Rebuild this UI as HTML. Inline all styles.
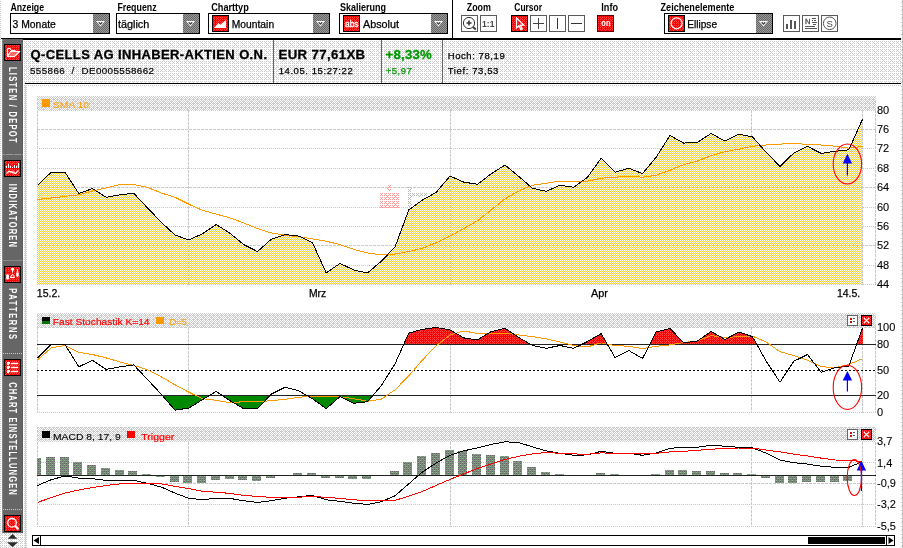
<!DOCTYPE html>
<html><head><meta charset="utf-8"><title>Q-CELLS AG Chart</title>
<style>
html,body{margin:0;padding:0;background:#fff;}
svg{display:block;will-change:transform;}
text{font-family:"Liberation Sans",sans-serif;}
.b{font-weight:bold;}
.t{stroke:#000;stroke-width:0.250px;}
.ln{fill:none;stroke-width:1;stroke-linejoin:round;shape-rendering:crispEdges;}
</style></head><body>
<svg width="903" height="548" viewBox="0 0 903 548" shape-rendering="crispEdges">
<defs>
<pattern id="dl" width="8" height="8" patternUnits="userSpaceOnUse"><rect width="8" height="8" fill="#fff"/><path d="M0 1h1v1h-1zM2 1h1v1h-1zM4 1h1v1h-1zM6 1h1v1h-1zM0 3h1v1h-1zM2 3h1v1h-1zM4 3h1v1h-1zM6 3h1v1h-1zM0 5h1v1h-1zM2 5h1v1h-1zM4 5h1v1h-1zM6 5h1v1h-1zM0 7h1v1h-1zM2 7h1v1h-1zM4 7h1v1h-1zM6 7h1v1h-1zM1 2h1v1h-1zM5 2h1v1h-1zM3 4h1v1h-1zM1 6h1v1h-1zM5 6h1v1h-1z" fill="#ccc"/></pattern>
<pattern id="dm" width="8" height="8" patternUnits="userSpaceOnUse"><rect width="8" height="8" fill="#fff"/><path d="M1 0h1v1h-1zM3 0h1v1h-1zM5 0h1v1h-1zM7 0h1v1h-1zM0 1h1v1h-1zM2 1h1v1h-1zM4 1h1v1h-1zM6 1h1v1h-1zM1 2h1v1h-1zM3 2h1v1h-1zM5 2h1v1h-1zM7 2h1v1h-1zM0 3h1v1h-1zM2 3h1v1h-1zM4 3h1v1h-1zM6 3h1v1h-1zM1 4h1v1h-1zM3 4h1v1h-1zM5 4h1v1h-1zM7 4h1v1h-1zM0 5h1v1h-1zM2 5h1v1h-1zM4 5h1v1h-1zM6 5h1v1h-1zM1 6h1v1h-1zM3 6h1v1h-1zM5 6h1v1h-1zM7 6h1v1h-1zM0 7h1v1h-1zM2 7h1v1h-1zM4 7h1v1h-1zM6 7h1v1h-1zM1 3h1v1h-1zM5 3h1v1h-1zM3 5h1v1h-1zM1 7h1v1h-1zM5 7h1v1h-1z" fill="#ccc"/></pattern>
<pattern id="dp" width="8" height="8" patternUnits="userSpaceOnUse"><path d="M0 1h1v1h-1zM2 1h1v1h-1zM4 1h1v1h-1zM6 1h1v1h-1zM0 3h1v1h-1zM2 3h1v1h-1zM4 3h1v1h-1zM6 3h1v1h-1zM0 5h1v1h-1zM2 5h1v1h-1zM4 5h1v1h-1zM6 5h1v1h-1zM0 7h1v1h-1zM2 7h1v1h-1zM4 7h1v1h-1zM6 7h1v1h-1zM1 2h1v1h-1zM5 2h1v1h-1zM3 4h1v1h-1zM1 6h1v1h-1zM5 6h1v1h-1z" fill="#f99"/></pattern>
<pattern id="dg" width="8" height="8" patternUnits="userSpaceOnUse"><path d="M0 1h1v1h-1zM2 1h1v1h-1zM4 1h1v1h-1zM6 1h1v1h-1zM0 3h1v1h-1zM2 3h1v1h-1zM4 3h1v1h-1zM6 3h1v1h-1zM0 5h1v1h-1zM2 5h1v1h-1zM4 5h1v1h-1zM6 5h1v1h-1zM0 7h1v1h-1zM2 7h1v1h-1zM4 7h1v1h-1zM6 7h1v1h-1zM1 2h1v1h-1zM5 2h1v1h-1zM3 4h1v1h-1zM1 6h1v1h-1zM5 6h1v1h-1z" fill="#bbb"/></pattern>
<pattern id="po" width="1" height="2" patternUnits="userSpaceOnUse"><rect y="1" width="1" height="1" fill="#ccc"/></pattern>
<pattern id="pe" width="2" height="1" patternUnits="userSpaceOnUse"><rect width="1" height="1" fill="#ccc"/></pattern>
<pattern id="p4" width="1" height="4" patternUnits="userSpaceOnUse"><rect y="2" width="1" height="1" fill="#ccc"/></pattern>
<pattern id="p8" width="1" height="8" patternUnits="userSpaceOnUse"><rect y="1" width="1" height="1" fill="#999"/></pattern>
<pattern id="dr" width="8" height="8" patternUnits="userSpaceOnUse"><rect width="8" height="8" fill="#f00"/><path d="M0 1h1v1h-1zM2 1h1v1h-1zM4 1h1v1h-1zM6 1h1v1h-1zM0 3h1v1h-1zM2 3h1v1h-1zM4 3h1v1h-1zM6 3h1v1h-1zM0 5h1v1h-1zM2 5h1v1h-1zM4 5h1v1h-1zM6 5h1v1h-1zM0 7h1v1h-1zM2 7h1v1h-1zM4 7h1v1h-1zM6 7h1v1h-1zM1 2h1v1h-1zM5 2h1v1h-1zM3 4h1v1h-1zM1 6h1v1h-1zM5 6h1v1h-1z" fill="#f44"/></pattern>
<pattern id="db" width="2" height="2" patternUnits="userSpaceOnUse"><rect width="2" height="2" fill="#999"/><path d="M0 0h1v1h-1zM1 1h1v1h-1z" fill="#666"/></pattern>
<pattern id="mt" width="2" height="2" patternUnits="userSpaceOnUse"><rect width="2" height="2" fill="#fff"/><path d="M1 0h1v1h-1zM0 1h1v1h-1z" fill="#fc3"/></pattern>
<pattern id="gb" width="4" height="4" patternUnits="userSpaceOnUse"><rect width="4" height="4" fill="#66a066"/><path d="M2 1h1v1h-1zM2 3h1v1h-1zM0 3h1v1h-1zM0 1h1v1h-1z" fill="#666"/><path d="M2 2h1v1h-1zM0 0h1v1h-1z" fill="#aaa"/></pattern>
<clipPath id="c80"><rect x="37" y="320" width="826" height="24.5"/></clipPath>
<clipPath id="c20"><rect x="37" y="395.5" width="826" height="30"/></clipPath>
</defs>

<rect x="0" y="0" width="903" height="548" fill="#fff"/>
<rect x="24" y="40" width="877" height="44" fill="url(#dl)"/>
<rect x="24" y="85" width="877" height="1" fill="url(#pe)"/>
<rect x="24" y="85" width="1" height="463" fill="url(#po)"/><rect x="26" y="85" width="1" height="463" fill="url(#po)"/><rect x="25" y="85" width="1" height="463" fill="#d2d2d2"/>
<rect x="0" y="0" width="1" height="533" fill="url(#po)"/>
<rect x="0" y="533" width="24" height="15" fill="url(#dl)"/>
<rect x="901" y="0" width="1" height="548" fill="url(#p4)"/>
<rect x="902" y="0" width="1" height="548" fill="#ccc"/><rect x="902" y="0" width="1" height="548" fill="url(#p8)"/>
<rect x="2" y="38" width="899" height="2" fill="#000"/>
<rect x="25" y="83" width="876" height="1" fill="#000"/>
<rect x="273" y="40" width="1" height="43" fill="#666"/>
<rect x="381" y="40" width="1" height="43" fill="#666"/>
<rect x="442" y="40" width="1" height="43" fill="#666"/>
<text class="b" x="10.4" y="11" font-size="11.300" textLength="33.7" lengthAdjust="spacingAndGlyphs">Anzeige</text>
<rect x="10.5" y="13.5" width="99" height="20" fill="#fff" stroke="#000" stroke-width="1"/>
<rect x="93" y="14" width="16" height="19" fill="url(#db)"/>
<path d="M96 21h9l-4.5 5.5z" fill="#fff" shape-rendering="geometricPrecision"/>
<path d="M98.7 22.200l1.800 1.800l1.800 -1.800" fill="none" stroke="#444" stroke-width="1.300" shape-rendering="geometricPrecision"/>
<text class="t" x="12.6" y="27.700" font-size="10" textLength="43.2" lengthAdjust="spacingAndGlyphs">3 Monate</text>
<text class="b" x="117.4" y="11" font-size="11.300" textLength="39.2" lengthAdjust="spacingAndGlyphs">Frequenz</text>
<rect x="116.5" y="13.5" width="83" height="20" fill="#fff" stroke="#000" stroke-width="1"/>
<rect x="183" y="14" width="16" height="19" fill="url(#db)"/>
<path d="M186 21h9l-4.5 5.5z" fill="#fff" shape-rendering="geometricPrecision"/>
<path d="M188.7 22.200l1.800 1.800l1.800 -1.800" fill="none" stroke="#444" stroke-width="1.300" shape-rendering="geometricPrecision"/>
<text class="t" x="117.9" y="27.700" font-size="10" textLength="31.4" lengthAdjust="spacingAndGlyphs">täglich</text>
<text class="b" x="211.2" y="11" font-size="11.300" textLength="37.6" lengthAdjust="spacingAndGlyphs">Charttyp</text>
<rect x="208.5" y="13.5" width="121" height="20" fill="#fff" stroke="#000" stroke-width="1"/>
<rect x="313" y="14" width="16" height="19" fill="url(#db)"/>
<path d="M316 21h9l-4.5 5.5z" fill="#fff" shape-rendering="geometricPrecision"/>
<path d="M318.7 22.200l1.800 1.800l1.800 -1.800" fill="none" stroke="#444" stroke-width="1.300" shape-rendering="geometricPrecision"/>
<text class="t" x="231.8" y="27.700" font-size="10" textLength="42.3" lengthAdjust="spacingAndGlyphs">Mountain</text>
<text class="b" x="340" y="11" font-size="11.300" textLength="46" lengthAdjust="spacingAndGlyphs">Skalierung</text>
<rect x="339.5" y="13.5" width="108" height="20" fill="#fff" stroke="#000" stroke-width="1"/>
<rect x="431" y="14" width="16" height="19" fill="url(#db)"/>
<path d="M434 21h9l-4.5 5.5z" fill="#fff" shape-rendering="geometricPrecision"/>
<path d="M436.7 22.200l1.800 1.800l1.800 -1.800" fill="none" stroke="#444" stroke-width="1.300" shape-rendering="geometricPrecision"/>
<text class="t" x="363" y="27.700" font-size="10" textLength="36" lengthAdjust="spacingAndGlyphs">Absolut</text>
<text class="b" x="466.7" y="11" font-size="11.300" textLength="24.3" lengthAdjust="spacingAndGlyphs">Zoom</text>
<text class="b" x="514.3" y="11" font-size="11.300" textLength="27.7" lengthAdjust="spacingAndGlyphs">Cursor</text>
<text class="b" x="601.3" y="11" font-size="11.300" textLength="16.7" lengthAdjust="spacingAndGlyphs">Info</text>
<text class="b" x="660.5" y="11" font-size="11.300" textLength="73.9" lengthAdjust="spacingAndGlyphs">Zeichenelemente</text>
<rect x="664.5" y="13.5" width="108" height="20" fill="#fff" stroke="#000" stroke-width="1"/>
<rect x="756" y="14" width="16" height="19" fill="url(#db)"/>
<path d="M759 21h9l-4.5 5.5z" fill="#fff" shape-rendering="geometricPrecision"/>
<path d="M761.7 22.200l1.800 1.800l1.800 -1.800" fill="none" stroke="#444" stroke-width="1.300" shape-rendering="geometricPrecision"/>
<text class="t" x="687.3" y="27.700" font-size="10" textLength="29.7" lengthAdjust="spacingAndGlyphs">Ellipse</text>
<rect x="212.5" y="15.5" width="16" height="16" fill="url(#dr)" stroke="#000" stroke-width="1"/>
<path d="M214 28l4.400 -5l1.900 1.800l5.700 -4.800v8z" fill="#fff" shape-rendering="geometricPrecision"/>
<rect x="343.5" y="15.5" width="16" height="16" fill="url(#dr)" stroke="#000" stroke-width="1"/>
<text x="345" y="26.700" font-size="9" fill="#fff" stroke="#fff" stroke-width="0.300" textLength="13.500" lengthAdjust="spacingAndGlyphs">abs</text>
<rect x="668.5" y="15.5" width="16" height="16" fill="url(#dr)" stroke="#000" stroke-width="1"/>
<circle cx="676.600" cy="23.300" r="5.500" fill="none" stroke="#fff" stroke-width="1.2" shape-rendering="geometricPrecision"/>
<rect x="461.5" y="15.5" width="16" height="16" fill="#fff" stroke="#5a5a5a" stroke-width="1"/>
<rect x="480.5" y="15.5" width="16" height="16" fill="#fff" stroke="#5a5a5a" stroke-width="1"/>
<g shape-rendering="geometricPrecision" fill="none" stroke="#333"><circle cx="469" cy="23" r="5.600" stroke-width="1"/><path d="M466.500 23h5M469 20.500v5" stroke-width="1.500"/><path d="M473 27l2.800 2.500" stroke-width="1.800"/></g>
<text class="b" x="482.100" y="26.900" font-size="9.800" fill="#444" textLength="12.300" lengthAdjust="spacingAndGlyphs">1:1</text>
<rect x="511.5" y="15.5" width="16" height="16" fill="url(#dr)" stroke="#000" stroke-width="1"/>
<path d="M516.500 18v10l2.500 -2.300l1.800 3.900l1.400 -0.600l-1.800 -3.900h3.500z" fill="none" stroke="#fff" stroke-width="1.2" shape-rendering="geometricPrecision"/>
<rect x="530.5" y="15.5" width="16" height="16" fill="#fff" stroke="#5a5a5a" stroke-width="1"/>
<rect x="549.5" y="15.5" width="16" height="16" fill="#fff" stroke="#5a5a5a" stroke-width="1"/>
<rect x="568.5" y="15.5" width="16" height="16" fill="#fff" stroke="#5a5a5a" stroke-width="1"/>
<path d="M533 23.500h11M538.500 18v11" stroke="#444" stroke-width="1" fill="none"/>
<path d="M557.500 18v11" stroke="#333" stroke-width="1" fill="none"/>
<path d="M571 23.500h11" stroke="#333" stroke-width="1" fill="none"/>
<rect x="597.500" y="15.500" width="16" height="16" fill="url(#dr)" stroke="#600" stroke-width="1"/>
<text class="b" x="601.300" y="26" font-size="8.500" fill="#fff" textLength="9.200" lengthAdjust="spacingAndGlyphs">on</text>
<rect x="783.5" y="15.5" width="16" height="16" fill="#fff" stroke="#5a5a5a" stroke-width="1"/>
<rect x="802.5" y="15.5" width="16" height="16" fill="#fff" stroke="#5a5a5a" stroke-width="1"/>
<rect x="821.5" y="15.5" width="16" height="16" fill="#fff" stroke="#5a5a5a" stroke-width="1"/>
<path d="M786 24h2v5h-2zM790 20h2v9h-2zM794 21h2v8h-2z" fill="#555"/>
<text x="805" y="23.500" font-size="7.500" fill="#444" stroke="#444" stroke-width="0.300">N</text>
<path d="M812 18.500h4M812 20.500h1M814 20.500h2M812 22.500h5M813 24.500h3M805 26.500h10M805 28.500h12" stroke="#555" stroke-width="1" fill="none"/>
<circle cx="829.700" cy="23.300" r="6.300" fill="none" stroke="#555" stroke-width="1" shape-rendering="geometricPrecision"/>
<text x="826.500" y="26.700" font-size="9.500" fill="#444">S</text>
<rect x="452" y="0" width="1" height="38" fill="#000"/>
<rect x="2" y="39" width="21" height="494" fill="#666"/><rect x="2" y="39" width="1" height="494" fill="#888"/>
<rect x="22" y="39" width="1" height="494" fill="#5c5c5c"/>
<rect x="1" y="38" width="22" height="1" fill="#000"/>
<text class="b" transform="translate(8.700 66.9) rotate(90) scale(0.670 1)" font-size="11.300" fill="#fff" textLength="113.0" lengthAdjust="spacing">LISTEN / DEPOT</text>
<text class="b" transform="translate(8.700 183.8) rotate(90) scale(0.670 1)" font-size="11.300" fill="#fff" textLength="94.2" lengthAdjust="spacing">INDIKATOREN</text>
<text class="b" transform="translate(8.700 288.3) rotate(90) scale(0.670 1)" font-size="11.300" fill="#fff" textLength="75.7" lengthAdjust="spacing">PATTERNS</text>
<text class="b" transform="translate(8.700 382.2) rotate(90) scale(0.670 1)" font-size="11.300" fill="#fff" textLength="168.1" lengthAdjust="spacing">CHART EINSTELLUNGEN</text>
<path d="M2 154.500h21" stroke="#999" stroke-width="1" stroke-dasharray="7 1" stroke-dashoffset="4" fill="none"/>
<path d="M2 260.500h21" stroke="#888" stroke-width="1" fill="none"/>
<path d="M3 353.500h20" stroke="#ccc" stroke-width="1" stroke-dasharray="1 1" fill="none"/>
<path d="M3 509.500h20" stroke="#ccc" stroke-width="1" stroke-dasharray="1 1" fill="none"/>
<rect x="4.5" y="44.5" width="16" height="16" fill="url(#dr)" stroke="#000" stroke-width="1"/>
<rect x="4.5" y="160.5" width="16" height="16" fill="url(#dr)" stroke="#000" stroke-width="1"/>
<rect x="4.5" y="266.5" width="16" height="16" fill="url(#dr)" stroke="#000" stroke-width="1"/>
<rect x="4.5" y="359.5" width="16" height="16" fill="url(#dr)" stroke="#000" stroke-width="1"/>
<rect x="4.5" y="515.5" width="16" height="16" fill="url(#dr)" stroke="#000" stroke-width="1"/>
<g shape-rendering="geometricPrecision"><path d="M10.500 51.500h9l-5 5h-7z" fill="#fff" opacity="0.350"/><path d="M7.500 48.500h2.500l1.500 2h3.500v1M7.500 48.500v8h7l5 -5h-9l-3 5" fill="none" stroke="#fff" stroke-width="1.100"/></g>
<path d="M6 166h1v2h-1zM8 164h1v4h-1zM10 166h1v2h-1zM12 167h1v1h-1zM14 165h1v3h-1zM16 166h1v2h-1zM18 163h1v5h-1z" fill="#fff"/>
<g shape-rendering="geometricPrecision"><path d="M6.500 173.500l2.500 -2.200l3.500 1.200l3 1l3 -3.200" fill="none" stroke="#fff" stroke-width="1.200"/><path d="M9.500 172.500l2.500 -1.500l3 1.500" fill="none" stroke="#fff" stroke-width="0.700"/></g>
<g shape-rendering="geometricPrecision"><path d="M11 268h3v2.300h-3zM7.500 274l1.400 1v3.700l-1.400 1.100l-1.300 -1.100v-3.700zM16.200 272.600h2.500v3.400l-1.250 1.200l-1.250 -1.200z" fill="#fff"/><path d="M12.500 270v2.600M17.500 269.200v3.400M12.400 274.200l-1.900 2.800M12.400 274.200l2 2.800M10.200 277.500h4.500" stroke="#fff" stroke-width="1" fill="none"/></g>
<path d="M7 362h3v3h-3zM7 366h3v3h-3zM7 370h3v3h-3z" fill="#fff"/><path d="M9 364h1v1h-1zM9 368h1v1h-1zM9 372h1v1h-1z" fill="#e33"/>
<g shape-rendering="geometricPrecision"><path d="M11 363.500h7M11 367.500h7M11 371.500h7" stroke="#fff" stroke-width="1.400" fill="none"/></g>
<g shape-rendering="geometricPrecision"><circle cx="12" cy="522.800" r="4.300" fill="none" stroke="#fff" stroke-width="1.300"/><path d="M15.200 526l3.200 3.200" stroke="#fff" stroke-width="2"/></g>
<g shape-rendering="geometricPrecision"><path d="M7.800 538.800h9.400l-4.700 -4.900zM7 542.200h11l-5.500 4.800z" fill="#2a2a2a"/></g>
<text class="b" x="30.500" y="58.700" font-size="13" stroke="#000" stroke-width="0.300" textLength="236.500" lengthAdjust="spacing">Q-CELLS AG INHABER-AKTIEN O.N.</text>
<text y="74" font-size="9.800" stroke="#000" stroke-width="0.200"><tspan x="30" textLength="34.800" lengthAdjust="spacing">555866</tspan> <tspan x="71.500">/</tspan> <tspan x="81.500" textLength="72.500" lengthAdjust="spacing">DE0005558662</tspan></text>
<text class="b" x="278.500" y="58.800" font-size="13.200" stroke="#000" stroke-width="0.300" textLength="86.600" lengthAdjust="spacing">EUR 77,61XB</text>
<text class="t" x="278.700" y="74" font-size="9.500" textLength="74" lengthAdjust="spacing">14.05. 15:27:22</text>
<text class="b" x="385.600" y="58.800" font-size="13.200" fill="#090" stroke="#090" stroke-width="0.300" textLength="46.100" lengthAdjust="spacing">+8,33%</text>
<text x="385.800" y="74" font-size="9.500" fill="#090" stroke="#090" stroke-width="0.250" textLength="25.900" lengthAdjust="spacing">+5,97</text>
<text class="t" x="447.700" y="59" font-size="9.500" textLength="57" lengthAdjust="spacing">Hoch: 78,19</text>
<text class="t" x="447.700" y="74" font-size="9.500" textLength="50.700" lengthAdjust="spacing">Tief: 73,53</text>
<rect x="37" y="96" width="839" height="15" fill="url(#dm)"/>
<rect x="42" y="99" width="8" height="8" fill="#f90"/>
<text x="53" y="107.700" font-size="9.300" fill="#f90" textLength="36" lengthAdjust="spacingAndGlyphs">SMA 10</text>
<path d="M37 129.5H876" stroke="#c8c8c8" stroke-width="1" stroke-dasharray="3 1" fill="none"/>
<path d="M37 148.5H876" stroke="#c8c8c8" stroke-width="1" stroke-dasharray="1 1" fill="none"/>
<path d="M37 168.5H876" stroke="#c8c8c8" stroke-width="1" stroke-dasharray="1 1" fill="none"/>
<path d="M37 187.5H876" stroke="#c8c8c8" stroke-width="1" stroke-dasharray="3 1" fill="none"/>
<path d="M37 207.5H876" stroke="#c8c8c8" stroke-width="1" stroke-dasharray="1 1" fill="none"/>
<path d="M37 226.5H876" stroke="#c8c8c8" stroke-width="1" stroke-dasharray="1 1" fill="none"/>
<path d="M37 245.5H876" stroke="#c8c8c8" stroke-width="1" stroke-dasharray="3 1" fill="none"/>
<path d="M37 265.5H876" stroke="#c8c8c8" stroke-width="1" stroke-dasharray="1 1" fill="none"/>
<path d="M37 284.5H876" stroke="#c8c8c8" stroke-width="1" stroke-dasharray="1 1" fill="none"/>
<path d="M37.5 110V285" stroke="#c8c8c8" stroke-width="1" stroke-dasharray="3 1" fill="none"/>
<path d="M188.5 110V285" stroke="#c8c8c8" stroke-width="1" stroke-dasharray="3 1" fill="none"/>
<path d="M450.5 110V285" stroke="#c8c8c8" stroke-width="1" stroke-dasharray="3 1" fill="none"/>
<path d="M751.5 110V285" stroke="#c8c8c8" stroke-width="1" stroke-dasharray="3 1" fill="none"/>
<path d="M862.5 110V285" stroke="#c8c8c8" stroke-width="1" stroke-dasharray="3 1" fill="none"/>
<path d="M875.5 110V285" stroke="#c8c8c8" stroke-width="1" stroke-dasharray="3 1" fill="none"/>
<polygon points="37.5,185.4 51.2,172.2 65.0,172.2 78.8,193.5 92.5,188.6 106.2,197.3 120.0,194.8 133.8,193.3 147.5,207.9 161.2,222.2 175.0,235.0 188.8,240.0 202.5,233.7 216.2,224.5 230.0,233.3 243.8,244.6 257.5,251.6 271.2,239.3 285.0,234.6 298.8,236.1 312.5,242.7 326.2,272.9 340.0,263.4 353.8,270.0 367.5,273.0 381.2,261.3 395.0,247.1 408.8,209.9 422.5,200.0 436.2,192.4 450.0,176.0 463.8,182.1 477.5,184.3 491.2,173.8 505.0,165.0 518.8,176.5 532.5,188.3 546.2,191.3 560.0,185.3 573.8,187.3 587.5,177.2 601.2,158.2 615.0,172.2 628.8,168.2 642.5,173.6 656.2,157.2 670.0,135.5 683.8,143.1 697.5,142.3 711.2,133.4 725.0,141.2 738.8,134.0 752.5,137.0 766.2,152.3 780.0,166.4 793.8,153.0 807.5,146.4 821.2,153.4 835.0,151.3 848.8,149.8 862,120.3 862,284 37,284 37,185.4" fill="url(#mt)"/>
<g opacity="0.9">
<path d="M37 129.5H862" stroke="#ccc" stroke-width="1" stroke-dasharray="1 3" fill="none"/>
<path d="M37 187.5H862" stroke="#ccc" stroke-width="1" stroke-dasharray="1 3" fill="none"/>
<path d="M37 245.5H862" stroke="#ccc" stroke-width="1" stroke-dasharray="1 3" fill="none"/>
<path d="M188.5 110V285" stroke="#ccc" stroke-width="1" stroke-dasharray="1 3" fill="none"/>
<path d="M450.5 110V285" stroke="#ccc" stroke-width="1" stroke-dasharray="1 3" fill="none"/>
<path d="M751.5 110V285" stroke="#ccc" stroke-width="1" stroke-dasharray="1 3" fill="none"/>
</g>
<polyline class="ln" stroke="#f90" points="37.5,199.5 51.2,198.0 65.0,196.4 78.8,194.8 92.5,191.0 106.2,187.9 120.0,184.5 133.8,184.5 147.5,187.3 161.2,193.0 175.0,197.3 188.8,204.2 202.5,210.3 216.2,214.1 230.0,217.9 243.8,223.0 257.5,228.6 271.2,232.9 285.0,235.2 298.8,236.7 312.5,239.0 326.2,241.2 340.0,244.6 353.8,249.3 367.5,253.0 381.2,254.8 395.0,254.1 408.8,251.5 422.5,248.2 436.2,242.7 450.0,236.2 463.8,228.5 477.5,220.8 491.2,209.9 505.0,198.9 518.8,191.0 532.5,185.3 546.2,183.2 560.0,181.2 573.8,181.2 587.5,181.2 601.2,178.2 615.0,177.2 628.8,176.2 642.5,177.2 656.2,175.2 670.0,170.2 683.8,164.6 697.5,161.0 711.2,155.5 725.0,151.7 738.8,149.2 752.5,146.2 766.2,145.0 780.0,144.1 793.8,143.5 807.5,144.3 821.2,145.0 835.0,146.2 848.8,148.1 862.5,146.4"/>
<polyline class="ln" stroke="#000" points="37.5,185.4 51.2,172.2 65.0,172.2 78.8,193.5 92.5,188.6 106.2,197.3 120.0,194.8 133.8,193.3 147.5,207.9 161.2,222.2 175.0,235.0 188.8,240.0 202.5,233.7 216.2,224.5 230.0,233.3 243.8,244.6 257.5,251.6 271.2,239.3 285.0,234.6 298.8,236.1 312.5,242.7 326.2,272.9 340.0,263.4 353.8,270.0 367.5,273.0 381.2,261.3 395.0,247.1 408.8,209.9 422.5,200.0 436.2,192.4 450.0,176.0 463.8,182.1 477.5,184.3 491.2,173.8 505.0,165.0 518.8,176.5 532.5,188.3 546.2,191.3 560.0,185.3 573.8,187.3 587.5,177.2 601.2,158.2 615.0,172.2 628.8,168.2 642.5,173.6 656.2,157.2 670.0,135.5 683.8,143.1 697.5,142.3 711.2,133.4 725.0,141.2 738.8,134.0 752.5,137.0 766.2,152.3 780.0,166.4 793.8,153.0 807.5,146.4 821.2,153.4 835.0,151.3 848.8,149.8 862.5,119.3"/>
<path d="M380 193h19v15h-19zM387 185h5v6h-5z" fill="url(#dp)"/><path d="M408 187h4v20h-4zM412 193h15v4h-15z" fill="url(#dg)"/>
<text stroke="#000" stroke-width="0.100" x="877" y="113.5" font-size="11">80</text>
<text stroke="#000" stroke-width="0.100" x="877" y="132.9" font-size="11">76</text>
<text stroke="#000" stroke-width="0.100" x="877" y="152.3" font-size="11">72</text>
<text stroke="#000" stroke-width="0.100" x="877" y="171.7" font-size="11">68</text>
<text stroke="#000" stroke-width="0.100" x="877" y="191.1" font-size="11">64</text>
<text stroke="#000" stroke-width="0.100" x="877" y="210.5" font-size="11">60</text>
<text stroke="#000" stroke-width="0.100" x="877" y="229.9" font-size="11">56</text>
<text stroke="#000" stroke-width="0.100" x="877" y="249.3" font-size="11">52</text>
<text stroke="#000" stroke-width="0.100" x="877" y="268.7" font-size="11">48</text>
<text stroke="#000" stroke-width="0.100" x="877" y="288.1" font-size="11">44</text>
<text class="t" x="36.800" y="296.800" font-size="10.500" textLength="23.400" lengthAdjust="spacingAndGlyphs">15.2.</text>
<text class="t" x="308.900" y="296.700" font-size="10.500" textLength="17.300" lengthAdjust="spacingAndGlyphs">Mrz</text>
<text class="t" x="590.900" y="296.700" font-size="10.500" textLength="17" lengthAdjust="spacingAndGlyphs">Apr</text>
<text class="t" x="836.900" y="296.800" font-size="10.500" textLength="23.400" lengthAdjust="spacingAndGlyphs">14.5.</text>
<g shape-rendering="geometricPrecision"><path d="M847.4 161.8V175.5" stroke="#00f" stroke-width="1.200" fill="none"/><path d="M847.4 153.8l-4.700 9.700h9.400z" fill="#00f"/>
<ellipse cx="847.4" cy="164" rx="14.2" ry="20" fill="none" stroke="#f00" stroke-width="1.100"/></g>
<rect x="37" y="313" width="839" height="15" fill="url(#dm)"/>
<rect x="42" y="317" width="8" height="4" fill="#000"/><rect x="42" y="321" width="8" height="3" fill="#070"/>
<text x="52.800" y="324.700" font-size="9.300" fill="#f00" stroke="#f00" stroke-width="0.200" textLength="96.700" lengthAdjust="spacingAndGlyphs">Fast Stochastik K=14</text>
<rect x="156" y="316.500" width="8" height="7" fill="#f90"/>
<text x="169.500" y="324.700" font-size="9.300" fill="#f90" textLength="17.500" lengthAdjust="spacingAndGlyphs">D=5</text>
<path d="M37.5 327V413" stroke="#c8c8c8" stroke-width="1" stroke-dasharray="3 1" fill="none"/>
<path d="M188.5 327V413" stroke="#c8c8c8" stroke-width="1" stroke-dasharray="3 1" fill="none"/>
<path d="M450.5 327V413" stroke="#c8c8c8" stroke-width="1" stroke-dasharray="3 1" fill="none"/>
<path d="M751.5 327V413" stroke="#c8c8c8" stroke-width="1" stroke-dasharray="3 1" fill="none"/>
<path d="M862.5 327V413" stroke="#c8c8c8" stroke-width="1" stroke-dasharray="3 1" fill="none"/>
<path d="M875.5 327V413" stroke="#c8c8c8" stroke-width="1" stroke-dasharray="3 1" fill="none"/>
<path d="M37 412.5H876" stroke="#c8c8c8" stroke-width="1" stroke-dasharray="1 1" fill="none"/>
<polygon clip-path="url(#c80)" points="37.5,357.9 51.2,344.5 65.0,344.5 78.8,366.8 92.5,360.3 106.2,369.4 120.0,366.8 133.8,364.9 147.5,379.5 161.2,394.2 175.0,410.1 188.8,408.1 202.5,399.7 216.2,391.4 230.0,400.7 243.8,408.7 257.5,408.7 271.2,394.2 285.0,387.2 298.8,390.8 312.5,398.7 326.2,408.7 340.0,396.7 353.8,403.3 367.5,401.7 381.2,385.8 395.0,363.9 408.8,333.0 422.5,329.4 436.2,327.4 450.0,330.0 463.8,337.9 477.5,339.9 491.2,331.6 505.0,328.4 518.8,337.5 532.5,345.5 546.2,348.3 560.0,345.5 573.8,348.3 587.5,341.5 601.2,333.6 615.0,357.5 628.8,350.5 642.5,358.5 656.2,332.0 670.0,328.4 683.8,342.9 697.5,340.9 711.2,331.4 725.0,339.5 738.8,332.0 752.5,336.7 766.2,361.3 780.0,382.2 793.8,361.3 807.5,354.5 821.2,372.4 835.0,367.7 848.8,366.0 862.5,328.2 862.5,344.5 37.5,344.5" fill="url(#dr)"/>
<polygon clip-path="url(#c20)" points="37.5,357.9 51.2,344.5 65.0,344.5 78.8,366.8 92.5,360.3 106.2,369.4 120.0,366.8 133.8,364.9 147.5,379.5 161.2,394.2 175.0,410.1 188.8,408.1 202.5,399.7 216.2,391.4 230.0,400.7 243.8,408.7 257.5,408.7 271.2,394.2 285.0,387.2 298.8,390.8 312.5,398.7 326.2,408.7 340.0,396.7 353.8,403.3 367.5,401.7 381.2,385.8 395.0,363.9 408.8,333.0 422.5,329.4 436.2,327.4 450.0,330.0 463.8,337.9 477.5,339.9 491.2,331.6 505.0,328.4 518.8,337.5 532.5,345.5 546.2,348.3 560.0,345.5 573.8,348.3 587.5,341.5 601.2,333.6 615.0,357.5 628.8,350.5 642.5,358.5 656.2,332.0 670.0,328.4 683.8,342.9 697.5,340.9 711.2,331.4 725.0,339.5 738.8,332.0 752.5,336.7 766.2,361.3 780.0,382.2 793.8,361.3 807.5,354.5 821.2,372.4 835.0,367.7 848.8,366.0 862.5,328.2 862.5,395.500 37.5,395.500" fill="#080"/>
<rect x="37" y="344" width="839" height="1" fill="#222"/>
<rect x="37" y="395" width="839" height="1" fill="#222"/>
<path d="M37 370.500H876" stroke="#000" stroke-width="1" stroke-dasharray="2 2" fill="none"/>
<polyline class="ln" stroke="#f90" points="37.5,359.9 51.2,347.9 65.0,345.5 78.8,352.3 92.5,354.5 106.2,357.9 120.0,361.9 133.8,365.5 147.5,369.8 161.2,376.8 175.0,384.8 188.8,392.2 202.5,398.7 216.2,400.3 230.0,402.7 243.8,401.7 257.5,401.7 271.2,400.7 285.0,399.3 298.8,397.3 312.5,396.1 326.2,396.3 340.0,396.7 353.8,398.7 367.5,401.3 381.2,399.3 395.0,389.8 408.8,375.8 422.5,359.9 436.2,345.9 450.0,335.0 463.8,331.0 477.5,333.4 491.2,333.0 505.0,333.0 518.8,335.0 532.5,336.6 546.2,338.9 560.0,341.9 573.8,345.5 587.5,346.9 601.2,342.9 615.0,345.5 628.8,346.3 642.5,348.5 656.2,346.3 670.0,344.9 683.8,342.5 697.5,340.9 711.2,335.6 725.0,337.4 738.8,336.7 752.5,336.1 766.2,342.1 780.0,351.7 793.8,355.5 807.5,360.2 821.2,366.6 835.0,367.7 848.8,364.5 862.5,358.7"/>
<polyline class="ln" stroke="#000" points="37.5,357.9 51.2,344.5 65.0,344.5 78.8,366.8 92.5,360.3 106.2,369.4 120.0,366.8 133.8,364.9 147.5,379.5 161.2,394.2 175.0,410.1 188.8,408.1 202.5,399.7 216.2,391.4 230.0,400.7 243.8,408.7 257.5,408.7 271.2,394.2 285.0,387.2 298.8,390.8 312.5,398.7 326.2,408.7 340.0,396.7 353.8,403.3 367.5,401.7 381.2,385.8 395.0,363.9 408.8,333.0 422.5,329.4 436.2,327.4 450.0,330.0 463.8,337.9 477.5,339.9 491.2,331.6 505.0,328.4 518.8,337.5 532.5,345.5 546.2,348.3 560.0,345.5 573.8,348.3 587.5,341.5 601.2,333.6 615.0,357.5 628.8,350.5 642.5,358.5 656.2,332.0 670.0,328.4 683.8,342.9 697.5,340.9 711.2,331.4 725.0,339.5 738.8,332.0 752.5,336.7 766.2,361.3 780.0,382.2 793.8,361.3 807.5,354.5 821.2,372.4 835.0,367.7 848.8,366.0 862.5,328.2"/>
<text stroke="#000" stroke-width="0.100" x="877" y="330.5" font-size="11">100</text>
<text stroke="#000" stroke-width="0.100" x="877" y="348.0" font-size="11">80</text>
<text stroke="#000" stroke-width="0.100" x="877" y="373.5" font-size="11">50</text>
<text stroke="#000" stroke-width="0.100" x="877" y="399.0" font-size="11">20</text>
<text stroke="#000" stroke-width="0.100" x="877" y="416.0" font-size="11">0</text>
<g shape-rendering="geometricPrecision"><path d="M847.4 378.9V391.6" stroke="#00f" stroke-width="1.200" fill="none"/><path d="M847.4 370.9l-4.700 9.700h9.400z" fill="#00f"/>
<ellipse cx="847.4" cy="387.4" rx="14.2" ry="22.1" fill="none" stroke="#f00" stroke-width="1.100"/></g>
<rect x="847.500" y="315.5" width="10" height="10" fill="#fff" stroke="#666" stroke-width="1"/>
<path d="M850 318h2v2h-2zM850 321h2v2h-2z" fill="#b11"/><path d="M853 318h2v1h-2zM853 321h2v1h-2z" fill="#555"/>
<rect x="861.500" y="315.5" width="10" height="10" fill="url(#dr)" stroke="#000" stroke-width="1"/>
<g shape-rendering="geometricPrecision"><path d="M863.800 317.8l5.400 5.400M869.200 317.8l-5.400 5.400" stroke="#fff" stroke-width="1.200" fill="none"/></g>
<rect x="37" y="427" width="839" height="15" fill="url(#dm)"/>
<rect x="42" y="431" width="8" height="7" fill="#000"/>
<text stroke="#000" stroke-width="0.100" x="53" y="439.700" font-size="9.300" textLength="67.700" lengthAdjust="spacingAndGlyphs">MACD 8, 17, 9</text>
<rect x="127" y="431" width="8" height="7" fill="#f00"/>
<text x="141.300" y="439.700" font-size="9.300" fill="#f00" stroke="#f00" stroke-width="0.200" textLength="33" lengthAdjust="spacingAndGlyphs">Trigger</text>
<path d="M37.5 442V527" stroke="#c8c8c8" stroke-width="1" stroke-dasharray="3 1" fill="none"/>
<path d="M188.5 442V527" stroke="#c8c8c8" stroke-width="1" stroke-dasharray="3 1" fill="none"/>
<path d="M450.5 442V527" stroke="#c8c8c8" stroke-width="1" stroke-dasharray="3 1" fill="none"/>
<path d="M751.5 442V527" stroke="#c8c8c8" stroke-width="1" stroke-dasharray="3 1" fill="none"/>
<path d="M862.5 442V527" stroke="#c8c8c8" stroke-width="1" stroke-dasharray="3 1" fill="none"/>
<path d="M875.5 442V527" stroke="#c8c8c8" stroke-width="1" stroke-dasharray="3 1" fill="none"/>
<path d="M37 462.5H876" stroke="#c8c8c8" stroke-width="1" stroke-dasharray="1 1" fill="none"/>
<path d="M37 483.5H876" stroke="#c8c8c8" stroke-width="1" stroke-dasharray="3 1" fill="none"/>
<path d="M37 504.5H876" stroke="#c8c8c8" stroke-width="1" stroke-dasharray="1 1" fill="none"/>
<path d="M37 526.5H876" stroke="#c8c8c8" stroke-width="1" stroke-dasharray="1 1" fill="none"/>
<rect x="37" y="458" width="4" height="18" fill="url(#gb)"/>
<rect x="46" y="457" width="9" height="19" fill="url(#gb)"/>
<rect x="60" y="457" width="9" height="19" fill="url(#gb)"/>
<rect x="73" y="462" width="9" height="14" fill="url(#gb)"/>
<rect x="87" y="465" width="9" height="11" fill="url(#gb)"/>
<rect x="101" y="468" width="9" height="8" fill="url(#gb)"/>
<rect x="115" y="470" width="9" height="6" fill="url(#gb)"/>
<rect x="128" y="471" width="9" height="5" fill="url(#gb)"/>
<rect x="142" y="474" width="9" height="2" fill="url(#gb)"/>
<rect x="156" y="476" width="9" height="1" fill="url(#gb)"/>
<rect x="170" y="476" width="9" height="6" fill="url(#gb)"/>
<rect x="183" y="476" width="9" height="7" fill="url(#gb)"/>
<rect x="197" y="476" width="9" height="7" fill="url(#gb)"/>
<rect x="211" y="476" width="9" height="4" fill="url(#gb)"/>
<rect x="225" y="476" width="9" height="3" fill="url(#gb)"/>
<rect x="238" y="476" width="9" height="4" fill="url(#gb)"/>
<rect x="252" y="476" width="9" height="5" fill="url(#gb)"/>
<rect x="266" y="476" width="9" height="2" fill="url(#gb)"/>
<rect x="293" y="473" width="9" height="3" fill="url(#gb)"/>
<rect x="307" y="473" width="9" height="3" fill="url(#gb)"/>
<rect x="321" y="476" width="9" height="2" fill="url(#gb)"/>
<rect x="335" y="476" width="9" height="2" fill="url(#gb)"/>
<rect x="348" y="476" width="9" height="3" fill="url(#gb)"/>
<rect x="362" y="476" width="9" height="3" fill="url(#gb)"/>
<rect x="390" y="471" width="9" height="5" fill="url(#gb)"/>
<rect x="403" y="462" width="9" height="14" fill="url(#gb)"/>
<rect x="417" y="456" width="9" height="20" fill="url(#gb)"/>
<rect x="431" y="453" width="9" height="23" fill="url(#gb)"/>
<rect x="445" y="450" width="9" height="26" fill="url(#gb)"/>
<rect x="458" y="451" width="9" height="25" fill="url(#gb)"/>
<rect x="472" y="454" width="9" height="22" fill="url(#gb)"/>
<rect x="486" y="455" width="9" height="21" fill="url(#gb)"/>
<rect x="500" y="456" width="9" height="20" fill="url(#gb)"/>
<rect x="513" y="461" width="9" height="15" fill="url(#gb)"/>
<rect x="527" y="467" width="9" height="9" fill="url(#gb)"/>
<rect x="541" y="472" width="9" height="4" fill="url(#gb)"/>
<rect x="555" y="474" width="9" height="2" fill="url(#gb)"/>
<rect x="596" y="473" width="9" height="3" fill="url(#gb)"/>
<rect x="610" y="474" width="9" height="2" fill="url(#gb)"/>
<rect x="651" y="474" width="9" height="2" fill="url(#gb)"/>
<rect x="665" y="470" width="9" height="6" fill="url(#gb)"/>
<rect x="678" y="470" width="9" height="6" fill="url(#gb)"/>
<rect x="692" y="471" width="9" height="5" fill="url(#gb)"/>
<rect x="706" y="471" width="9" height="5" fill="url(#gb)"/>
<rect x="720" y="473" width="9" height="3" fill="url(#gb)"/>
<rect x="733" y="473" width="9" height="3" fill="url(#gb)"/>
<rect x="747" y="474" width="9" height="2" fill="url(#gb)"/>
<rect x="761" y="476" width="9" height="2" fill="url(#gb)"/>
<rect x="775" y="476" width="9" height="7" fill="url(#gb)"/>
<rect x="788" y="476" width="9" height="7" fill="url(#gb)"/>
<rect x="802" y="476" width="9" height="6" fill="url(#gb)"/>
<rect x="816" y="476" width="9" height="6" fill="url(#gb)"/>
<rect x="830" y="476" width="9" height="6" fill="url(#gb)"/>
<rect x="843" y="476" width="9" height="5" fill="url(#gb)"/>
<rect x="37" y="475" width="839" height="1" fill="#222"/>
<polyline class="ln" stroke="#000" points="37.5,485.5 51.2,479.7 65.0,476.0 78.8,478.1 92.5,478.7 106.2,480.4 120.0,480.4 133.8,480.4 147.5,483.4 161.2,487.0 175.0,493.1 188.8,498.3 202.5,499.6 216.2,498.4 230.0,498.4 243.8,500.8 257.5,502.4 271.2,500.8 285.0,498.2 298.8,496.8 312.5,495.4 326.2,499.8 340.0,501.4 353.8,503.2 367.5,504.4 381.2,501.8 395.0,495.8 408.8,483.8 422.5,471.9 436.2,463.0 450.0,455.3 463.8,450.8 477.5,447.9 491.2,444.4 505.0,441.8 518.8,442.6 532.5,446.9 546.2,450.9 560.0,453.3 573.8,455.3 587.5,454.9 601.2,451.3 615.0,453.3 628.8,453.3 642.5,455.3 656.2,452.9 670.0,448.3 683.8,447.3 697.5,447.3 711.2,445.2 725.0,446.2 738.8,447.3 752.5,447.8 766.2,453.1 780.0,460.0 793.8,462.7 807.5,464.1 821.2,466.2 835.0,467.3 848.8,467.3 862.5,461.6"/>
<polyline class="ln" stroke="#f00" points="37.5,502.4 51.2,497.7 65.0,493.1 78.8,490.0 92.5,487.6 106.2,485.5 120.0,483.9 133.8,483.4 147.5,483.4 161.2,483.9 175.0,486.3 188.8,488.6 202.5,491.4 216.2,492.2 230.0,493.4 243.8,495.4 257.5,496.4 271.2,497.4 285.0,497.4 298.8,497.2 312.5,496.4 326.2,497.4 340.0,498.4 353.8,499.8 367.5,500.8 381.2,500.8 395.0,500.4 408.8,496.2 422.5,491.4 436.2,485.4 450.0,479.4 463.8,473.9 477.5,468.5 491.2,463.9 505.0,459.5 518.8,456.3 532.5,453.9 546.2,452.5 560.0,453.3 573.8,453.9 587.5,454.3 601.2,452.9 615.0,453.3 628.8,453.3 642.5,453.5 656.2,453.3 670.0,451.9 683.8,451.3 697.5,450.3 711.2,449.2 725.0,448.5 738.8,448.0 752.5,448.0 766.2,450.1 780.0,451.9 793.8,454.2 807.5,456.0 821.2,458.1 835.0,460.0 848.8,460.4 862.5,461.6"/>
<text stroke="#000" stroke-width="0.100" x="877" y="445.0" font-size="11">3,7</text>
<text stroke="#000" stroke-width="0.100" x="877" y="466.5" font-size="11">1,4</text>
<text stroke="#000" stroke-width="0.100" x="877" y="487.2" font-size="11">-0,9</text>
<text stroke="#000" stroke-width="0.100" x="877" y="508.1" font-size="11">-3,2</text>
<text stroke="#000" stroke-width="0.100" x="877" y="530.0" font-size="11">-5,5</text>
<g shape-rendering="geometricPrecision"><path d="M861.4 468.8V491" stroke="#00f" stroke-width="1.200" fill="none"/><path d="M861.4 460.8l-4.700 9.700h9.400z" fill="#00f"/>
<ellipse cx="854.4" cy="477.5" rx="7.2" ry="18" fill="none" stroke="#f00" stroke-width="1.100"/></g>
<rect x="847.500" y="429.5" width="10" height="10" fill="#fff" stroke="#666" stroke-width="1"/>
<path d="M850 432h2v2h-2zM850 435h2v2h-2z" fill="#b11"/><path d="M853 432h2v1h-2zM853 435h2v1h-2z" fill="#555"/>
<rect x="861.500" y="429.5" width="10" height="10" fill="url(#dr)" stroke="#000" stroke-width="1"/>
<g shape-rendering="geometricPrecision"><path d="M863.800 431.8l5.400 5.400M869.200 431.8l-5.400 5.400" stroke="#fff" stroke-width="1.200" fill="none"/></g>
<rect x="32.500" y="535.500" width="862" height="10" fill="#fff" stroke="#000" stroke-width="1"/>
<rect x="40" y="536" width="1" height="9" fill="#000"/>
<g shape-rendering="geometricPrecision"><path d="M39 537v7l-5.500 -3.500z" fill="#000"/></g>
<rect x="808" y="537" width="77" height="7" fill="#000"/>
<rect x="886" y="536" width="1" height="9" fill="#000"/>
<g shape-rendering="geometricPrecision"><path d="M888.500 537v7l5 -3.500z" fill="#000"/></g>
</svg></body></html>
